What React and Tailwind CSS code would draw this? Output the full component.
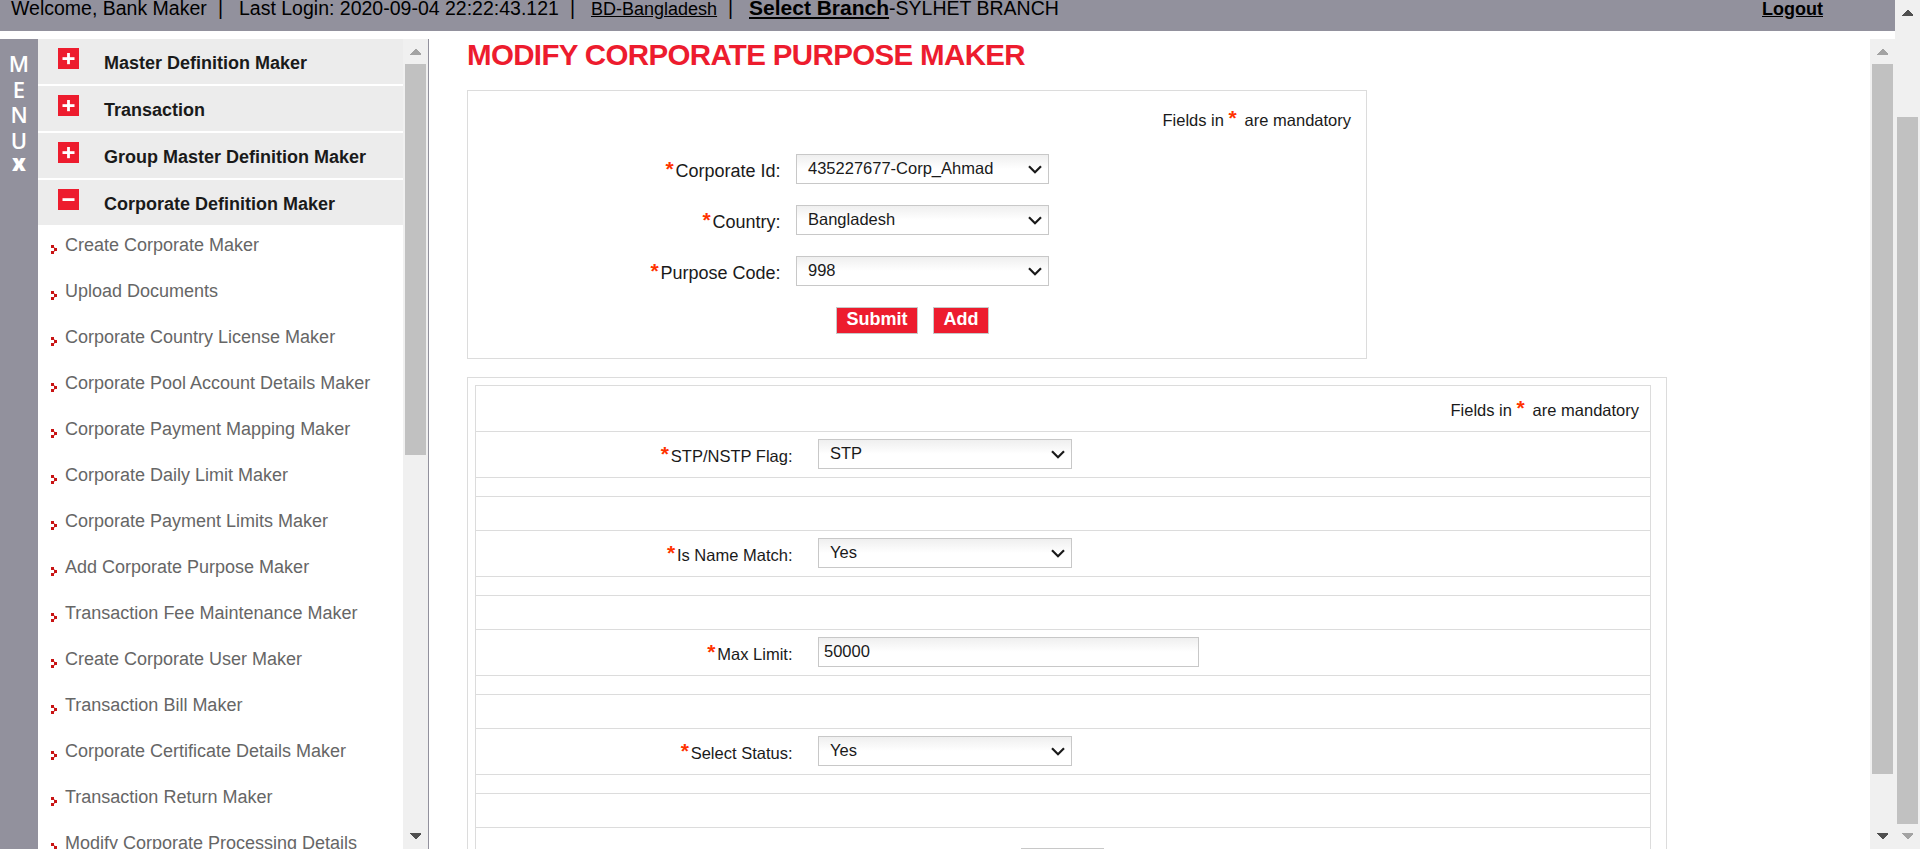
const groups = [
  ['Master Definition Maker', false],
  ['Transaction', false],
  ['Group Master Definition Maker', false],
  ['Corporate Definition Maker', true],
];

const items = [
  'Create Corporate Maker',
  'Upload Documents',
  'Corporate Country License Maker',
  'Corporate Pool Account Details Maker',
  'Corporate Payment Mapping Maker',
  'Corporate Daily Limit Maker',
  'Corporate Payment Limits Maker',
  'Add Corporate Purpose Maker',
  'Transaction Fee Maintenance Maker',
  'Create Corporate User Maker',
  'Transaction Bill Maker',
  'Corporate Certificate Details Maker',
  'Transaction Return Maker',
  'Modify Corporate Processing Details',
];

function ToggleIcon({ open }) {
  return (
    <svg className="mt-[9px] h-[21px] w-[21px] shrink-0" viewBox="0 0 21 21">
      <rect width="21" height="21" fill="#ed1c2e" />
      <rect x="4.5" y="9.2" width="12" height="2.8" fill="#fff" />
      {!open && <rect x="9.1" y="5" width="2.8" height="11.2" fill="#fff" />}
    </svg>
  );
}

function Bullet() {
  return (
    <svg className="mt-[20px] h-[9px] w-[6px] shrink-0" viewBox="0 0 6 9" shapeRendering="crispEdges">
      <rect x="0" y="0" width="3" height="3" fill="#c81414" />
      <rect x="3" y="3" width="3" height="3" fill="#c81414" />
      <rect x="0" y="6" width="3" height="3" fill="#c81414" />
      <rect x="3" y="2" width="1" height="1" fill="#e79a9a" />
      <rect x="3" y="6" width="1" height="1" fill="#e79a9a" />
    </svg>
  );
}

function Arrow({ down, color }) {
  return (
    <svg className="h-[6px] w-[11px] shrink-0" viewBox="0 0 11 6" shapeRendering="crispEdges">
      <path d={down ? 'M0 0H11V1L6 6H5L0 1Z' : 'M0 6H11V5L6 0H5L0 5Z'} fill={color} />
    </svg>
  );
}

function Star({ className = 'w-[10px]' }) {
  return (
    <span
      className={`inline-block text-left align-[1px] text-[21px] leading-none font-bold text-[#ff3300] ${className}`}
    >
      *
    </span>
  );
}

function Mandatory() {
  return (
    <span className="text-[16.5px] leading-[24px] whitespace-pre">
      {'Fields in '}
      <Star className="w-[11.5px]" />
      {' are mandatory'}
    </span>
  );
}

function SelectBox({ value, className }) {
  return (
    <div
      className={`flex h-[30px] items-start justify-between border border-[#c8c8c8] bg-linear-to-b from-[#efefef] to-white to-50% pr-[6px] pl-[11px] text-[16.5px] leading-[27px] ${className}`}
    >
      <span>{value}</span>
      <svg className="mt-[10px] h-[9px] w-[14px]" viewBox="0 0 14 9" fill="none" stroke="#1a1a1a" strokeWidth="2.2">
        <path d="M1 1.2L7 7.2L13 1.2" />
      </svg>
    </div>
  );
}

function TopField({ label, value }) {
  return (
    <div className="flex h-[51px]">
      <div className="w-[312.5px] pt-[4px] text-right text-[18px] leading-[24px]">
        <Star />
        {label}
      </div>
      <SelectBox value={value} className="ml-[15.5px] w-[253px]" />
    </div>
  );
}

function DetailRows({ label, children }) {
  return (
    <>
      <div className="flex h-[46px] border-b border-[#dcdcdc] pt-[7px]">
        <div className="w-[316.5px] pt-[4px] text-right text-[16.5px] leading-[24px]">
          <Star />
          {label}
        </div>
        <div className="ml-[25.5px]">{children}</div>
      </div>
      <div className="h-[19px] border-b border-[#dcdcdc]" />
      <div className="h-[34px] border-b border-[#dcdcdc]" />
    </>
  );
}

export default function App() {
  return (
    <div className="flex h-[849px] w-[1920px] overflow-hidden bg-white font-['Liberation_Sans',Arial,sans-serif] text-[#1a1a1a]">
      <div className="flex min-w-0 flex-1 flex-col">
        <header className="flex h-[31px] shrink-0 overflow-hidden bg-[#92919d] text-black">
          <div className="-mt-[4px] flex h-[30px] flex-1 items-baseline text-[19.5px] leading-[24px] whitespace-nowrap">
            <span className="ml-[11px] w-[207px]">Welcome, Bank Maker</span>
            <span className="w-[21px]">|</span>
            <span className="w-[331px]">Last Login: 2020-09-04 22:22:43.121</span>
            <span className="w-[21px]">|</span>
            <span className="w-[137px] text-[18px] underline">BD-Bangladesh</span>
            <span className="w-[21px]">|</span>
            <span className="text-[21px] font-bold underline">Select Branch</span>
            <span>-SYLHET BRANCH</span>
            <span className="mr-[72px] ml-auto text-[18px] font-bold underline">Logout</span>
          </div>
        </header>

        <div className="mt-[8px] flex min-h-0 flex-1">
          <div className="flex w-[38px] shrink-0 flex-col items-center bg-[#92919d] pt-[12px] font-['Open_Sans','Noto_Sans',sans-serif] text-[22px] leading-[25.5px] font-semibold text-white">
            <span>M</span>
            <span>E</span>
            <span>N</span>
            <span>U</span>
            <span className="-mt-[3px] font-extrabold">x</span>
          </div>

          <nav className="flex w-[365px] shrink-0 flex-col overflow-hidden">
            <div className="flex flex-col gap-[2px]">
              {groups.map(([name, open]) => (
                <div key={name} className="flex h-[45px] shrink-0 bg-[#ececec] pl-[20px]">
                  <ToggleIcon open={open} />
                  <span className="ml-[25px] pt-[12px] text-[18px] leading-[24px] font-bold">{name}</span>
                </div>
              ))}
            </div>
            {items.map((name) => (
              <div key={name} className="flex h-[46px] shrink-0 pl-[13px] text-[18px] leading-[40px] text-[#666]">
                <Bullet />
                <span className="ml-[8px] whitespace-nowrap">{name}</span>
              </div>
            ))}
          </nav>

          <div className="flex w-[26px] shrink-0 flex-col items-center border-r border-[#92919d] bg-[#f0f0f0] pt-[10px] pb-[10px]">
            <Arrow color="#a3a3a3" />
            <div className="mt-[9px] h-[391px] w-[21px] bg-[#c1c1c1]" />
            <div className="flex-1" />
            <Arrow down color="#505050" />
          </div>

          <main className="flex min-w-0 flex-1 flex-col overflow-hidden pl-[38px]">
            <h1 className="h-[51px] shrink-0 text-[29.5px] leading-[31px] font-bold tracking-[-0.65px] whitespace-nowrap text-[#ed1c2e]">
              MODIFY CORPORATE PURPOSE MAKER
            </h1>

            <section className="h-[269px] w-[900px] shrink-0 border border-[#dcdcdc]">
              <div className="flex h-[63px] justify-end pt-[16px] pr-[15px]">
                <Mandatory />
              </div>
              <TopField label="Corporate Id:" value="435227677-Corp_Ahmad" />
              <TopField label="Country:" value="Bangladesh" />
              <TopField label="Purpose Code:" value="998" />
              <div className="flex gap-[15px] pl-[368px] text-[18px] leading-[23px] font-bold text-white">
                <div className="h-[27px] w-[82px] border border-[#c8c8c8] bg-[#ed1c2e] text-center">Submit</div>
                <div className="h-[27px] w-[56px] border border-[#c8c8c8] bg-[#ed1c2e] text-center">Add</div>
              </div>
            </section>

            <section className="mt-[18px] h-[520px] w-[1200px] shrink-0 border border-[#dcdcdc] py-[7px] pl-[7px]">
              <div className="h-[520px] w-[1176px] border border-[#dcdcdc]">
                <div className="flex h-[46px] justify-end border-b border-[#dcdcdc] pt-[11px] pr-[11px]">
                  <Mandatory />
                </div>
                <DetailRows label="STP/NSTP Flag:">
                  <SelectBox value="STP" className="w-[254px]" />
                </DetailRows>
                <DetailRows label="Is Name Match:">
                  <SelectBox value="Yes" className="w-[254px]" />
                </DetailRows>
                <DetailRows label="Max Limit:">
                  <div className="h-[30px] w-[381px] border border-[#c8c8c8] bg-linear-to-b from-[#efefef] to-white to-50% pl-[5px] text-[16.5px] leading-[26px]">
                    50000
                  </div>
                </DetailRows>
                <DetailRows label="Select Status:">
                  <SelectBox value="Yes" className="w-[254px]" />
                </DetailRows>
                <div className="ml-[545px] mt-[20px] h-[27px] w-[83px] border border-[#c8c8c8] bg-[#ed1c2e]" />
              </div>
            </section>
          </main>

          <div className="flex w-[25px] shrink-0 flex-col items-center bg-[#f0f0f0] pt-[10px] pb-[10px]">
            <Arrow color="#a3a3a3" />
            <div className="mt-[9px] h-[710px] w-[21px] bg-[#c1c1c1]" />
            <div className="flex-1" />
            <Arrow down color="#505050" />
          </div>
        </div>
      </div>

      <div className="flex w-[25px] shrink-0 flex-col items-center bg-[#f0f0f0] pt-[10px] pb-[10px]">
        <Arrow color="#505050" />
        <div className="mt-[101px] h-[707px] w-[21px] bg-[#c1c1c1]" />
        <div className="flex-1" />
        <Arrow down color="#a3a3a3" />
      </div>
    </div>
  );
}
